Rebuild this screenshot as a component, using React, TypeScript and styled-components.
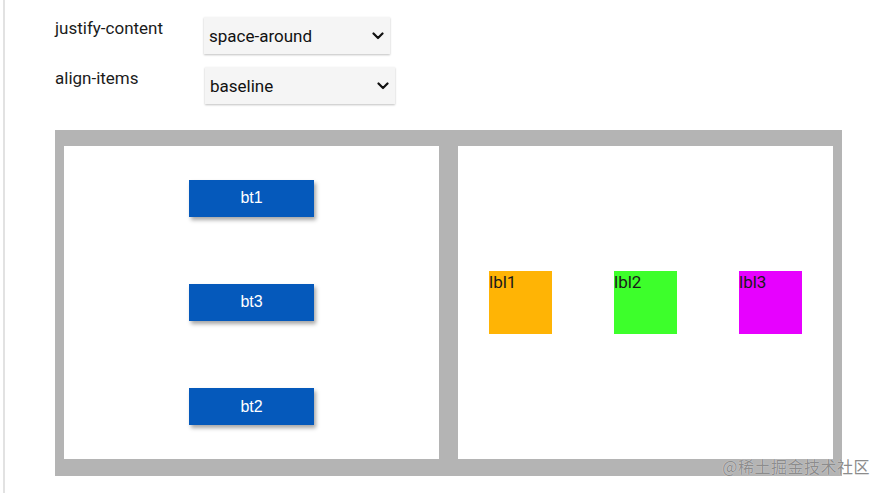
import React from "react";
import styled, { createGlobalStyle } from "styled-components";

const GlobalStyle = createGlobalStyle`
  html, body {
    margin: 0;
    padding: 0;
    background: #ffffff;
  }
  body {
    font-family: Roboto, "Liberation Sans", sans-serif;
    color: #1d1d1d;
  }
`;

type BoxColor = "orange" | "green" | "magenta";

const colors: Record<BoxColor, string> = {
  orange: "#ffb405",
  green: "#3dff2b",
  magenta: "#e701ff",
};

const Chevron = () => (
  <svg width="12" height="8" viewBox="0 0 12 8" fill="none">
    <path
      d="M1.5 1.5 L6 6 L10.5 1.5"
      stroke="#111"
      strokeWidth="2.2"
      strokeLinecap="round"
      strokeLinejoin="round"
    />
  </svg>
);

const App = () => {
  return (
    <Page>
      <GlobalStyle />
      <Controls>
        <ControlRow>
          <Label>justify-content</Label>
          <Select width={186}>
            <span>space-around</span>
            <Chevron />
          </Select>
        </ControlRow>
        <ControlRow>
          <Label>align-items</Label>
          <Select width={190} shift={1}>
            <span>baseline</span>
            <Chevron />
          </Select>
        </ControlRow>
      </Controls>

      <Stage>
        <ButtonPanel>
          <BlueButton>bt1</BlueButton>
          <BlueButton>bt3</BlueButton>
          <BlueButton>bt2</BlueButton>
        </ButtonPanel>
        <LabelPanel>
          <ColorBox color="orange">lbl1</ColorBox>
          <ColorBox color="green">lbl2</ColorBox>
          <ColorBox color="magenta">lbl3</ColorBox>
        </LabelPanel>
        <Watermark>@稀土掘金技术社区</Watermark>
      </Stage>
    </Page>
  );
};

const Page = styled.div`
  margin-left: 3px;
  border-left: 2px solid #e2e2e2;
  min-height: 493px;
  box-sizing: border-box;
  padding: 17px 0 0 50px;
`;

const Controls = styled.div`
  display: flex;
  flex-direction: column;
  gap: 13px;
`;

const ControlRow = styled.div`
  display: flex;
  align-items: flex-start;
`;

const Label = styled.div`
  width: 149px;
  padding-top: 1px;
  font-size: 17px;
  line-height: 20px;
  color: #1b1b1b;
`;

const Select = styled.div<{ width: number; shift?: number }>`
  width: ${(p) => p.width}px;
  height: 37px;
  margin-left: ${(p) => p.shift || 0}px;
  box-sizing: border-box;
  display: flex;
  align-items: center;
  justify-content: space-between;
  padding: 0 6px 0 5px;
  background: #f5f5f5;
  box-shadow: 0 1px 2px rgba(0, 0, 0, 0.25);
  font-size: 17px;
  color: #111;
`;

const Stage = styled.div`
  position: relative;
  margin-top: 26px;
  width: 787px;
  height: 346px;
  box-sizing: border-box;
  padding: 16px 9px 17px 9px;
  background: #b4b4b4;
  display: flex;
  gap: 19px;
`;

const Panel = styled.div`
  flex: 1;
  background: #ffffff;
  display: flex;
  justify-content: space-around;
  align-items: center;
`;

const ButtonPanel = styled(Panel)`
  flex-direction: column;
`;

const LabelPanel = styled(Panel)`
  flex-direction: row;
`;

const BlueButton = styled.div`
  width: 125px;
  height: 37px;
  background: #0559bb;
  color: #ffffff;
  font-family: "Liberation Sans", Arial, sans-serif;
  font-size: 16px;
  display: flex;
  align-items: center;
  justify-content: center;
  box-shadow: 2px 3px 4px rgba(0, 0, 0, 0.35);
`;

const ColorBox = styled.div<{ color: BoxColor }>`
  width: 63px;
  height: 63px;
  background: ${(p) => colors[p.color]};
  font-size: 17px;
  line-height: 22px;
  color: #1a1a1a;
`;

const Watermark = styled.div`
  position: absolute;
  right: -28px;
  bottom: 0px;
  font-family: "Noto Sans CJK SC", sans-serif;
  font-size: 16px;
  line-height: 20px;
  color: #8c8c8c;
  letter-spacing: 0.5px;
  text-shadow: 0 0 1px rgba(255, 255, 255, 0.8);
`;

export default App;
